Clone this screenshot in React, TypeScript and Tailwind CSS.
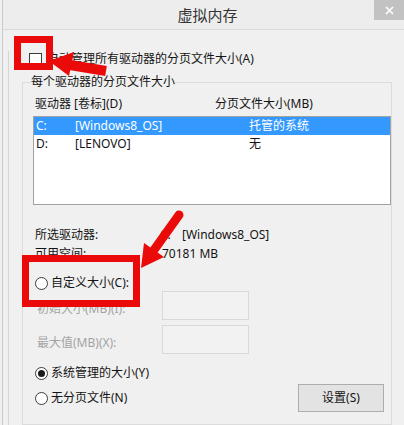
import type { ReactNode } from 'react'

function Radio({ checked = false }: { checked?: boolean }) {
  return (
    <span className="flex h-[13px] w-[13px] shrink-0 items-center justify-center rounded-full border border-[#3c3c3c] bg-white">
      {checked && <span className="h-[7px] w-[7px] rounded-full bg-[#1a1a1a]" />}
    </span>
  )
}

function RadioRow({ checked, children }: { checked?: boolean; children: ReactNode }) {
  return (
    <div className="flex h-[16px] items-center">
      <Radio checked={checked} />
      <span className="ml-[3px]">{children}</span>
    </div>
  )
}

function SizeField({ label }: { label: string }) {
  return (
    <div className="flex h-[29px] items-center pl-[14px]">
      <span className="w-[125px] pt-[6px] text-[#a3a3a3]">{label}</span>
      <span className="h-[29px] w-[87px] border border-[#d9d9d9] bg-[#f2f2f2]" />
    </div>
  )
}

const drives = [
  { letter: 'C:', label: '[Windows8_OS]', size: '托管的系统', selected: true },
  { letter: 'D:', label: '[LENOVO]', size: '无', selected: false },
]

export default function App() {
  return (
    <div className="relative h-[425px] w-[404px] overflow-hidden bg-[#f0f0f0] font-['Noto_Sans','Noto_Sans_CJK_SC',sans-serif] text-[12px] leading-[16px] text-[#141414]">
      <div className="ml-[2px] h-full border-l border-[#c9c9c9]">
        {/* title bar */}
        <div className="relative flex h-[30px] items-center justify-center border-b border-[#d9d9d9] bg-[#ededed] pl-[8px]">
          <span className="text-[15px] text-[#333]">虚拟内存</span>
          <span className="absolute right-0 top-0 flex h-[20px] w-[30px] items-center justify-center bg-[#c2c2c2]">
            <svg width="9" height="9" viewBox="0 0 9 9">
              <path d="M1 1L8 8M8 1L1 8" stroke="#fff" strokeWidth="1.6" />
            </svg>
          </span>
        </div>

        <div className="ml-[5px] h-[395px] border-l border-[#d4d4d4]">
          <div className="mt-[21px] flex h-[16px] items-center pl-[20px]">
            <span className="h-[13px] w-[13px] border border-[#3c3c3c] bg-white" />
            <span className="ml-[5px]">自动管理所有驱动器的分页文件大小(A)</span>
          </div>

          <fieldset className="ml-[13px] mt-[7px] w-[369px] border border-[#dcdcdc] pb-[12px]">
            <legend className="ml-[8px] leading-[16px]">每个驱动器的分页文件大小</legend>

            <div className="mt-[6px] flex h-[16px] items-center pl-[12px]">
              <span className="w-[180px]">驱动器 [卷标](D)</span>
              <span>分页文件大小(MB)</span>
            </div>

            <div className="ml-[10px] mt-[4px] h-[89px] w-[358px] border border-[#a2a2a2] bg-white">
              {drives.map((d) => (
                <div
                  key={d.letter}
                  className={`flex h-[18px] items-center pl-[2px] ${d.selected ? 'bg-[#3399ff] text-white' : ''}`}
                >
                  <span className="w-[39px]">{d.letter}</span>
                  <span className="w-[174px]">{d.label}</span>
                  <span>{d.size}</span>
                </div>
              ))}
            </div>

            <div className="mt-[20px] pl-[12px]">
              <div className="flex h-[19px] items-center">
                <span className="w-[125px]">所选驱动器:</span>
                <span className="w-[22px]">C:</span>
                <span>[Windows8_OS]</span>
              </div>
              <div className="flex h-[19px] items-center">
                <span className="w-[127px]">可用空间:</span>
                <span>70181 MB</span>
              </div>
            </div>

            <div className="mt-[12px] pl-[12px]">
              <RadioRow>自定义大小(C):</RadioRow>
            </div>

            <SizeField label="初始大小(MB)(I):" />
            <div className="mt-[5px]">
              <SizeField label="最大值(MB)(X):" />
            </div>

            <div className="mt-[11px] pl-[12px]">
              <RadioRow checked>系统管理的大小(Y)</RadioRow>
            </div>

            <div className="mt-[3px] flex h-[28px] items-center justify-between pl-[12px] pr-[7px]">
              <RadioRow>无分页文件(N)</RadioRow>
              <button
                type="button"
                className="h-[28px] w-[86px] border border-[#adadad] bg-[#e3e3e3] text-[12px] text-[#141414]"
              >
                设置(S)
              </button>
            </div>
          </fieldset>
        </div>
      </div>

      {/* red annotation marks drawn over the screenshot */}
      <svg className="pointer-events-none absolute inset-0" width="404" height="425" viewBox="0 0 404 425">
        <g fill="#ea0a0a" stroke="#ea0a0a">
          <rect x="17.5" y="39.5" width="32" height="27" fill="none" strokeWidth="7" />
          <rect x="25.5" y="258.5" width="111" height="45" fill="none" strokeWidth="7" />
          <polygon points="49,61 74,52 69,76" stroke="none" />
          <line x1="70" y1="65" x2="106" y2="71" strokeWidth="10" />
          <polygon points="141,268 164,257 144,243" stroke="none" />
          <line x1="154" y1="250" x2="179" y2="215" strokeWidth="9" strokeLinecap="round" />
        </g>
      </svg>
    </div>
  )
}
